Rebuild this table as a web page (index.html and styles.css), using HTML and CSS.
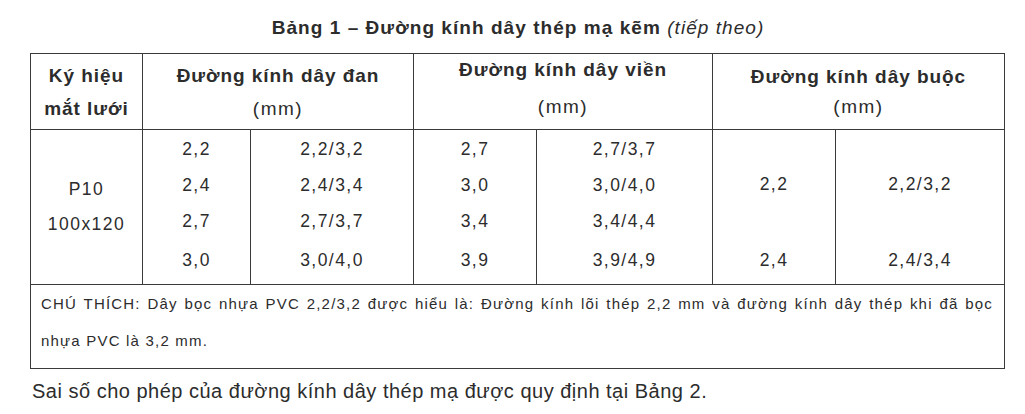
FILE: index.html
```html
<!DOCTYPE html>
<html lang="vi">
<head>
<meta charset="utf-8">
<link rel="stylesheet" href="styles.css">
</head>
<body>
<div class="page">
  <h1 class="title">Bảng 1 – Đường kính dây thép mạ kẽm <span class="cont">(tiếp theo)</span></h1>
  <table class="tbl">
    <colgroup>
      <col class="c1"><col class="c2"><col class="c3"><col class="c4"><col class="c5"><col class="c6"><col class="c7">
    </colgroup>
    <thead>
      <tr class="head">
        <th><span class="hl">Ký hiệu</span><span class="hl">mắt lưới</span></th>
        <th colspan="2"><span class="hl">Đường kính dây đan</span><span class="hl unit">(mm)</span></th>
        <th colspan="2" class="h-vien"><span class="hl">Đường kính dây viền</span><span class="hl unit">(mm)</span></th>
        <th colspan="2" class="h-buoc"><span class="hl">Đường kính dây buộc</span><span class="hl unit">(mm)</span></th>
      </tr>
    </thead>
    <tbody>
      <tr class="r1">
        <td rowspan="4" class="code"><span class="hl">P10</span><span class="hl">100x120</span></td>
        <td>2,2</td><td>2,2/3,2</td><td>2,7</td><td>2,7/3,7</td>
        <td rowspan="3">2,2</td><td rowspan="3">2,2/3,2</td>
      </tr>
      <tr class="r2">
        <td>2,4</td><td>2,4/3,4</td><td>3,0</td><td>3,0/4,0</td>
      </tr>
      <tr class="r3">
        <td>2,7</td><td>2,7/3,7</td><td>3,4</td><td>3,4/4,4</td>
      </tr>
      <tr class="r4">
        <td>3,0</td><td>3,0/4,0</td><td>3,9</td><td>3,9/4,9</td><td>2,4</td><td>2,4/3,4</td>
      </tr>
      <tr class="note-row">
        <td colspan="7" class="note">CHÚ THÍCH: Dây bọc nhựa PVC 2,2/3,2 được hiểu là: Đường kính lõi thép 2,2 mm và đường kính dây thép khi đã bọc nhựa PVC là 3,2 mm.</td>
      </tr>
    </tbody>
  </table>
  <p class="after">Sai số cho phép của đường kính dây thép mạ được quy định tại Bảng 2.</p>
</div>
</body>
</html>
```
FILE: styles.css
```css
html, body {
  margin: 0;
  padding: 0;
  background: #ffffff;
}
body {
  font-family: "Liberation Sans", Arial, sans-serif;
  color: #2c2c2c;
}
.page {
  width: 974px;
  padding: 17px 0 0 30px;
}
.title {
  margin: 0 0 14px 0;
  text-align: center;
  font-size: 19px;
  line-height: 22px;
  font-weight: bold;
  letter-spacing: 1.05px;
  padding-left: 2px;
}
.title .cont {
  font-weight: normal;
  font-style: italic;
}
.tbl {
  width: 974px;
  border-collapse: collapse;
  table-layout: fixed;
  font-size: 17.5px;
}
.c1 { width: 112px; }
.c2 { width: 108px; }
.c3 { width: 163px; }
.c4 { width: 123px; }
.c5 { width: 176px; }
.c6 { width: 123px; }
.c7 { width: 169px; }
.tbl th, .tbl td {
  border: 1px solid #3a3a3a;
  padding: 0;
  text-align: center;
  vertical-align: middle;
}
.tbl tbody td {
  border-top: none;
  border-bottom: none;
  letter-spacing: 1.45px;
}
.head { height: 76px; }
.head th {
  font-size: 19px;
  font-weight: bold;
  letter-spacing: 0.95px;
}
.hl {
  display: block;
  line-height: 33px;
}
.hl.unit {
  font-weight: normal;
  letter-spacing: 1.5px;
}
.h-vien .hl:first-child { line-height: 36px; margin-top: -6px; }
.h-vien .hl.unit { line-height: 38px; }
.h-buoc .hl { line-height: 30px; }
.r1 { height: 38px; }
.r2 { height: 35px; }
.r3 { height: 37px; }
.r4 { height: 45px; }
.tbl tbody tr.r4 td { border-bottom: 1px solid #3a3a3a; }
.code .hl { line-height: 35px; }
.r1 td:not([rowspan]) { padding-top: 2px; }
.r4 td { padding-bottom: 2px; }
.tbl tbody tr.r1 td { border-top: 1px solid #3a3a3a; }
.note-row { height: 84px; }
.tbl td.note {
  border: 1px solid #3a3a3a;
  text-align: justify;
  text-align-last: left;
  vertical-align: top;
  font-size: 15px;
  line-height: 37px;
  letter-spacing: 1.2px;
  padding: 0 11px 0 10px;
}
.after {
  margin: 10px 0 0 2px;
  font-size: 20px;
  line-height: 24px;
  letter-spacing: 0.5px;
}
```
